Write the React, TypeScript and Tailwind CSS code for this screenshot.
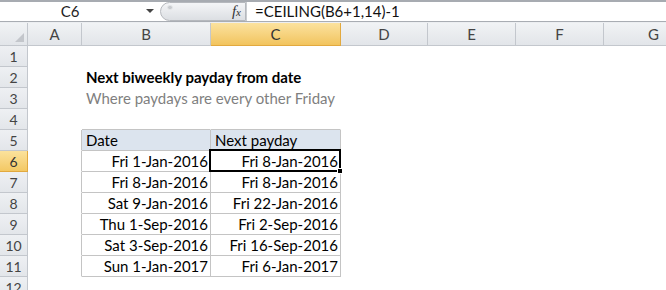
import React from "react";

const COLS = [
  { k: "A", w: 54 },
  { k: "B", w: 129 },
  { k: "C", w: 130 },
  { k: "D", w: 87 },
  { k: "E", w: 88 },
  { k: "F", w: 88 },
  { k: "G", w: 100 },
];

const FONT = { fontFamily: "Lato, 'Open Sans', 'Liberation Sans', sans-serif" };

const data: [string, string][] = [
  ["Fri 1-Jan-2016", "Fri 8-Jan-2016"],
  ["Fri 8-Jan-2016", "Fri 8-Jan-2016"],
  ["Sat 9-Jan-2016", "Fri 22-Jan-2016"],
  ["Thu 1-Sep-2016", "Fri 2-Sep-2016"],
  ["Sat 3-Sep-2016", "Fri 16-Sep-2016"],
  ["Sun 1-Jan-2017", "Fri 6-Jan-2017"],
];

function RowHeader({ n, active }: { n: number; active?: boolean }) {
  return (
    <div
      className={
        "w-[28px] shrink-0 h-[21px] flex items-center justify-center border-r border-b text-[14px] " +
        (active
          ? "bg-gradient-to-b from-[#fbe29c] to-[#f3c863] border-[#e2a93f] text-[#333]"
          : "bg-gradient-to-b from-[#eef0f3] to-[#e3e6ea] border-[#c3c7cd] text-[#444]")
      }
    >
      {n}
    </div>
  );
}

function Cell({
  w,
  children,
  className = "",
  table,
  topBorder,
}: {
  w: number;
  children?: React.ReactNode;
  className?: string;
  table?: boolean;
  topBorder?: boolean;
}) {
  return (
    <div
      style={{ width: w }}
      className={
        "shrink-0 h-[21px] flex items-center border-r border-b pl-[4px] pr-[2px] whitespace-nowrap text-[15px] leading-none relative " +
        (table ? "border-[#c4c4c4] " : topBorder ? "border-r-transparent border-b-[#c4c4c4] " : "border-transparent ") +
        className
      }
    >
      {children}
    </div>
  );
}

function SheetRow({ n, active, children }: { n: number; active?: boolean; children?: React.ReactNode }) {
  return (
    <div className="flex">
      <RowHeader n={n} active={active} />
      {children}
    </div>
  );
}

function Empty({ from }: { from: number }) {
  return (
    <>
      {COLS.slice(from).map((c) => (
        <Cell key={c.k} w={c.w} />
      ))}
    </>
  );
}

export default function App() {
  return (
    <div className="w-[666px] h-[290px] overflow-hidden bg-white text-black" style={FONT}>
      {/* formula bar */}
      <div className="flex h-[22px] border-t-2 border-b border-t-[#a7abb1] border-b-[#a9adb3] bg-white">
        <div className="w-[158px] shrink-0 relative flex items-center justify-center text-[15px] text-[#222]">
          <span className="ml-[-18px]">C6</span>
          <span className="absolute left-[146px] top-[7px] w-0 h-0 border-l-[4px] border-r-[4px] border-t-[4px] border-l-transparent border-r-transparent border-t-[#444]" />
        </div>
        <div className="w-[86px] shrink-0 ml-[2px] relative rounded-l-full border border-[#b5b8bd] bg-gradient-to-b from-[#f4f5f7] to-[#dcdfe3] flex items-center justify-end pr-[4px]">
          <span className="absolute left-[6px] top-[2px] w-[6px] h-[5px] rounded-full bg-[#c9ccd0] border border-[#e6e8ea]" />
          <span
            className="italic text-[15px] text-[#333] leading-none"
            style={{ fontFamily: "'Liberation Serif', 'DejaVu Serif', serif" }}
          >
            f<span className="text-[11px]">x</span>
          </span>
        </div>
        <div className="flex-1 border-l border-[#c9ccd0] flex items-center pl-[8px] text-[15px] text-[#111]">
          =CEILING(B6+1,14)-1
        </div>
      </div>
      <div className="h-[1px] bg-[#eceef1]" />
      {/* column headers */}
      <div className="flex h-[23px]">
        <div className="w-[28px] shrink-0 relative border-r border-b border-[#c3c7cd] bg-gradient-to-b from-[#f1f3f5] to-[#e2e5e9]">
          <span className="absolute right-[3px] bottom-[3px] w-0 h-0 border-l-[9px] border-l-transparent border-b-[9px] border-b-[#c3c6cb]" />
        </div>
        {COLS.map((c) => {
          const active = c.k === "C";
          return (
            <div
              key={c.k}
              style={{ width: c.w }}
              className={
                "shrink-0 border-r border-b flex items-center justify-center text-[15px] " +
                (active
                  ? "bg-gradient-to-b from-[#fbe29e] to-[#f2c45d] border-[#e2a93f] text-[#333]"
                  : "bg-gradient-to-b from-[#f1f3f5] to-[#e2e5e9] border-[#c3c7cd] text-[#444]")
              }
            >
              {c.k}
            </div>
          );
        })}
      </div>
      {/* rows */}
      <SheetRow n={1}>
        <Empty from={0} />
      </SheetRow>
      <SheetRow n={2}>
        <Cell w={54} />
        <Cell w={129} className="font-bold overflow-visible z-10">
          Next biweekly payday from date
        </Cell>
        <Empty from={2} />
      </SheetRow>
      <SheetRow n={3}>
        <Cell w={54} />
        <Cell w={129} className="text-[#7f7f7f] overflow-visible z-10">
          Where paydays are every other Friday
        </Cell>
        <Empty from={2} />
      </SheetRow>
      <SheetRow n={4}>
        <Cell w={54} />
        <Cell w={129} topBorder />
        <Cell w={130} topBorder />
        <Empty from={3} />
      </SheetRow>
      <SheetRow n={5}>
        <Cell w={54} className="border-r-[#c4c4c4]" />
        <Cell w={129} table className="bg-[#dce4ee]">
          Date
        </Cell>
        <Cell w={130} table className="bg-[#dce4ee]">
          Next payday
        </Cell>
        <Empty from={3} />
      </SheetRow>
      {data.map(([b, c], i) => (
        <SheetRow key={i} n={6 + i} active={i === 0}>
          <Cell w={54} className="border-r-[#c4c4c4]" />
          <Cell w={129} table className="justify-end">
            {b}
          </Cell>
          <Cell w={130} table className="justify-end">
            {c}
            {i === 0 && (
              <>
                <span className="absolute left-[-2px] top-[-2px] right-[-1px] bottom-[-1px] border-2 border-black pointer-events-none" />
                <span className="absolute right-[-3px] bottom-[-3px] w-[6px] h-[6px] bg-black border border-white z-10" />
              </>
            )}
          </Cell>
          <Empty from={3} />
        </SheetRow>
      ))}
      <SheetRow n={12}>
        <Empty from={0} />
      </SheetRow>
    </div>
  );
}
